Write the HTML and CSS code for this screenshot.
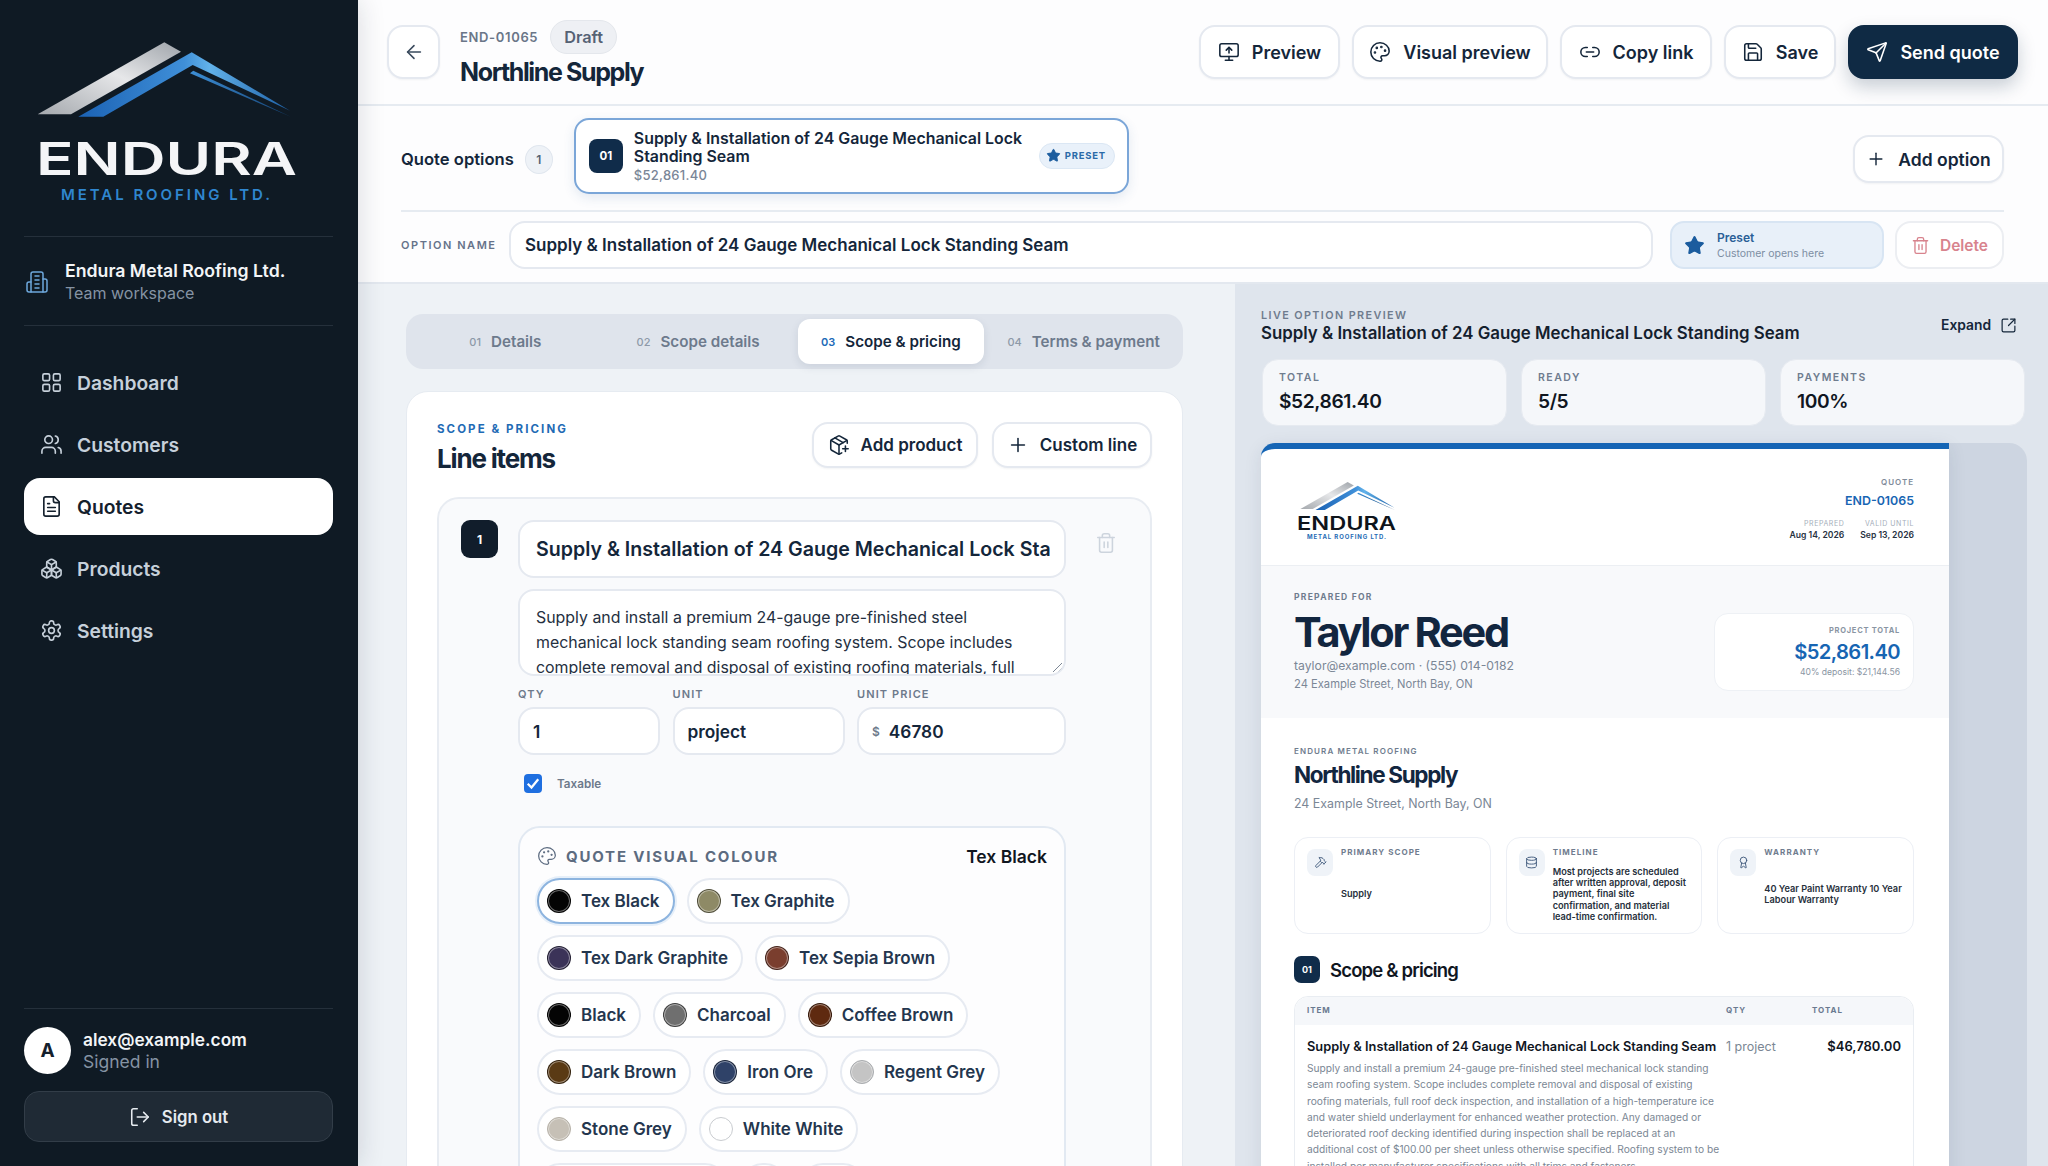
FILE: index.html
```html
<!DOCTYPE html>
<html lang="en">

<head>
    <meta charset="UTF-8" />
    <title>Northline Supply - Quote END-01065</title>
    <link rel="stylesheet" href="styles.css">
</head>

<body>
    <!-- icon sprite -->
    <svg class="sprite" aria-hidden="true">
        <defs>
            <linearGradient id="roofGrey" x1="0" y1="1" x2="1" y2="0">
                <stop offset="0" stop-color="#a5a9ae" />
                <stop offset="0.55" stop-color="#e6e7e9" />
                <stop offset="1" stop-color="#9fa4aa" />
            </linearGradient>
            <linearGradient id="roofBlue" x1="0" y1="0" x2="1" y2="0">
                <stop offset="0" stop-color="#1b62b4" />
                <stop offset="0.5" stop-color="#3f8fd8" />
                <stop offset="0.62" stop-color="#62b2ea" />
                <stop offset="1" stop-color="#1c5fa6" />
            </linearGradient>
            <linearGradient id="roofThin" x1="0" y1="0" x2="1" y2="0">
                <stop offset="0" stop-color="#3d8fd6" />
                <stop offset="1" stop-color="#123f70" />
            </linearGradient>
        </defs>
        <symbol id="i-roof" viewBox="37 42 254 75">
            <polygon points="37.7,114.3 164.3,42.3 181,51.7 71,114.3" fill="url(#roofGrey)" />
            <polygon points="78.3,116.7 191.7,52.3 290,110.7 192.7,65 103.3,116.7" fill="url(#roofBlue)" />
            <polygon points="190,73.3 193.3,70.7 290.7,116.7" fill="url(#roofThin)" />
        </symbol>
        <symbol id="i-grid" viewBox="0 0 24 24"><rect x="3" y="3" width="7" height="7" rx="1.5" /><rect x="14" y="3" width="7" height="7" rx="1.5" /><rect x="14" y="14" width="7" height="7" rx="1.5" /><rect x="3" y="14" width="7" height="7" rx="1.5" /></symbol>
        <symbol id="i-users" viewBox="0 0 24 24"><path d="M16 21v-2a4 4 0 0 0-4-4H6a4 4 0 0 0-4 4v2" /><circle cx="9" cy="7" r="4" /><path d="M22 21v-2a4 4 0 0 0-3-3.87" /><path d="M16 3.13a4 4 0 0 1 0 7.75" /></symbol>
        <symbol id="i-file" viewBox="0 0 24 24"><path d="M15 2H6a2 2 0 0 0-2 2v16a2 2 0 0 0 2 2h12a2 2 0 0 0 2-2V7Z" /><path d="M14 2v4a2 2 0 0 0 2 2h4" /><path d="M10 9H8" /><path d="M16 13H8" /><path d="M16 17H8" /></symbol>
        <symbol id="i-boxes" viewBox="0 0 24 24"><path d="M2.97 12.92A2 2 0 0 0 2 14.63v3.24a2 2 0 0 0 .97 1.71l3 1.8a2 2 0 0 0 2.06 0L12 19v-5.5l-5-3-4.03 2.42Z" /><path d="m7 16.5-4.74-2.85" /><path d="m7 16.5 5-3" /><path d="M7 16.5v5.17" /><path d="M12 13.5V19l3.97 2.38a2 2 0 0 0 2.06 0l3-1.8a2 2 0 0 0 .97-1.71v-3.24a2 2 0 0 0-.97-1.71L17 10.5l-5 3Z" /><path d="m17 16.5-5-3" /><path d="m17 16.5 4.74-2.85" /><path d="M17 16.5v5.17" /><path d="M7.97 4.42A2 2 0 0 0 7 6.13v4.37l5 3 5-3V6.13a2 2 0 0 0-.97-1.71l-3-1.8a2 2 0 0 0-2.06 0l-3 1.8Z" /><path d="M12 8 7.26 5.15" /><path d="m12 8 4.74-2.85" /><path d="M12 13.5V8" /></symbol>
        <symbol id="i-gear" viewBox="0 0 24 24"><path d="M12.22 2h-.44a2 2 0 0 0-2 2v.18a2 2 0 0 1-1 1.73l-.43.25a2 2 0 0 1-2 0l-.15-.08a2 2 0 0 0-2.73.73l-.22.38a2 2 0 0 0 .73 2.73l.15.1a2 2 0 0 1 1 1.72v.51a2 2 0 0 1-1 1.74l-.15.09a2 2 0 0 0-.73 2.73l.22.38a2 2 0 0 0 2.73.73l.15-.08a2 2 0 0 1 2 0l.43.25a2 2 0 0 1 1 1.73V20a2 2 0 0 0 2 2h.44a2 2 0 0 0 2-2v-.18a2 2 0 0 1 1-1.73l.43-.25a2 2 0 0 1 2 0l.15.08a2 2 0 0 0 2.73-.73l.22-.39a2 2 0 0 0-.73-2.73l-.15-.08a2 2 0 0 1-1-1.74v-.5a2 2 0 0 1 1-1.74l.15-.09a2 2 0 0 0 .73-2.73l-.22-.38a2 2 0 0 0-2.73-.73l-.15.08a2 2 0 0 1-2 0l-.43-.25a2 2 0 0 1-1-1.73V4a2 2 0 0 0-2-2z" /><circle cx="12" cy="12" r="3" /></symbol>
        <symbol id="i-building" viewBox="0 0 24 24"><path d="M6 22V4a2 2 0 0 1 2-2h8a2 2 0 0 1 2 2v18Z" /><path d="M6 12H4a2 2 0 0 0-2 2v6a2 2 0 0 0 2 2h2" /><path d="M18 9h2a2 2 0 0 1 2 2v9a2 2 0 0 1-2 2h-2" /><path d="M10 6h4" /><path d="M10 10h4" /><path d="M10 14h4" /><path d="M10 18h4" /></symbol>
        <symbol id="i-back" viewBox="0 0 24 24"><path d="m12 19-7-7 7-7" /><path d="M19 12H5" /></symbol>
        <symbol id="i-monitor" viewBox="0 0 24 24"><path d="m9 10 3-3 3 3" /><path d="M12 13V7" /><rect x="2" y="3" width="20" height="14" rx="2" /><path d="M12 17v4" /><path d="M8 21h8" /></symbol>
        <symbol id="i-palette" viewBox="0 0 24 24"><path d="M12 22a1 1 0 0 1 0-20 10 9 0 0 1 10 9 5 5 0 0 1-5 5h-2.25a1.75 1.75 0 0 0-1.4 2.8l.3.4a1.75 1.75 0 0 1-1.4 2.8z" /><circle cx="13.5" cy="6.5" r=".6" /><circle cx="17.5" cy="10.5" r=".6" /><circle cx="6.5" cy="12.5" r=".6" /><circle cx="8.5" cy="7.5" r=".6" /></symbol>
        <symbol id="i-link" viewBox="0 0 24 24"><path d="M9 17H7A5 5 0 0 1 7 7h2" /><path d="M15 7h2a5 5 0 1 1 0 10h-2" /><path d="M8 12h8" /></symbol>
        <symbol id="i-save" viewBox="0 0 24 24"><path d="M15.2 3a2 2 0 0 1 1.4.6l3.8 3.8a2 2 0 0 1 .6 1.4V19a2 2 0 0 1-2 2H5a2 2 0 0 1-2-2V5a2 2 0 0 1 2-2z" /><path d="M17 21v-7a1 1 0 0 0-1-1H8a1 1 0 0 0-1 1v7" /><path d="M7 3v4a1 1 0 0 0 1 1h7" /></symbol>
        <symbol id="i-send" viewBox="0 0 24 24"><path d="M14.536 21.686a.5.5 0 0 0 .937-.024l6.5-19a.496.496 0 0 0-.635-.635l-19 6.5a.5.5 0 0 0-.024.937l7.93 3.18a2 2 0 0 1 1.112 1.11z" /><path d="m21.854 2.147-10.94 10.939" /></symbol>
        <symbol id="i-plus" viewBox="0 0 24 24"><path d="M5 12h14" /><path d="M12 5v14" /></symbol>
        <symbol id="i-star" viewBox="0 0 24 24"><path d="M11.525 2.295a.53.53 0 0 1 .95 0l2.31 4.679a2.123 2.123 0 0 0 1.595 1.16l5.166.756a.53.53 0 0 1 .294.904l-3.736 3.638a2.123 2.123 0 0 0-.611 1.878l.882 5.14a.53.53 0 0 1-.771.56l-4.618-2.428a2.122 2.122 0 0 0-1.973 0L6.396 21.01a.53.53 0 0 1-.77-.56l.881-5.139a2.122 2.122 0 0 0-.611-1.879L2.16 9.795a.53.53 0 0 1 .294-.906l5.165-.755a2.122 2.122 0 0 0 1.597-1.16z" /></symbol>
        <symbol id="i-trash" viewBox="0 0 24 24"><path d="M3 6h18" /><path d="M19 6v14c0 1-1 2-2 2H7c-1 0-2-1-2-2V6" /><path d="M8 6V4c0-1 1-2 2-2h4c1 0 2 1 2 2v2" /><path d="M10 11v6" /><path d="M14 11v6" /></symbol>
        <symbol id="i-expand" viewBox="0 0 24 24"><path d="M21 13v6a2 2 0 0 1-2 2H5a2 2 0 0 1-2-2V5a2 2 0 0 1 2-2h6" /><path d="m21 3-9 9" /><path d="M15 3h6v6" /></symbol>
        <symbol id="i-logout" viewBox="0 0 24 24"><path d="M9 21H5a2 2 0 0 1-2-2V5a2 2 0 0 1 2-2h4" /><path d="m16 17 5-5-5-5" /><path d="M21 12H9" /></symbol>
        <symbol id="i-package" viewBox="0 0 24 24"><path d="M16 16h6" /><path d="M19 13v6" /><path d="M21 10V8a2 2 0 0 0-1-1.73l-7-4a2 2 0 0 0-2 0l-7 4A2 2 0 0 0 3 8v8a2 2 0 0 0 1 1.73l7 4a2 2 0 0 0 2 0l2-1.14" /><path d="m7.5 4.27 9 5.15" /><path d="M3.29 7 12 12l8.71-5" /><path d="M12 22V12" /></symbol>
        <symbol id="i-hammer" viewBox="0 0 24 24"><path d="m15 12-8.373 8.373a1 1 0 1 1-3-3L12 9" /><path d="m18 15 4-4" /><path d="m21.5 11.5-1.914-1.914A2 2 0 0 1 19 8.172V7l-2.26-2.26a6 6 0 0 0-4.202-1.756L9 2.96l.92.82A6.18 6.18 0 0 1 12 8.4V10l2 2h1.172a2 2 0 0 1 1.414.586L18.5 14.5" /></symbol>
        <symbol id="i-database" viewBox="0 0 24 24"><ellipse cx="12" cy="5" rx="9" ry="3" /><path d="M3 5v14a9 3 0 0 0 18 0V5" /><path d="M3 12a9 3 0 0 0 18 0" /></symbol>
        <symbol id="i-award" viewBox="0 0 24 24"><path d="m15.477 12.89 1.515 8.526a.5.5 0 0 1-.81.47l-3.58-2.687a1 1 0 0 0-1.197 0l-3.586 2.686a.5.5 0 0 1-.81-.469l1.514-8.526" /><circle cx="12" cy="8" r="6" /></symbol>
    </svg>

    <div class="app">
        <!-- ====== Sidebar ====== -->
        <aside class="sidebar">
            <svg class="brand" viewBox="24 0 310 236">
                <use href="#i-roof" x="37" y="42" width="254" height="75" />
                <text x="36" y="175" textLength="261" lengthAdjust="spacingAndGlyphs" class="brand-name">ENDURA</text>
                <text x="61" y="200" textLength="209" class="brand-sub">METAL ROOFING LTD.</text>
            </svg>

            <div class="workspace">
                <svg class="icon workspace-icon"><use href="#i-building" /></svg>
                <div>
                    <div class="workspace-name">Endura Metal Roofing Ltd.</div>
                    <div class="workspace-sub">Team workspace</div>
                </div>
            </div>

            <nav class="nav">
                <a class="nav-item"><svg class="icon"><use href="#i-grid" /></svg>Dashboard</a>
                <a class="nav-item"><svg class="icon"><use href="#i-users" /></svg>Customers</a>
                <a class="nav-item active"><svg class="icon"><use href="#i-file" /></svg>Quotes</a>
                <a class="nav-item"><svg class="icon"><use href="#i-boxes" /></svg>Products</a>
                <a class="nav-item"><svg class="icon"><use href="#i-gear" /></svg>Settings</a>
            </nav>

            <div class="account">
                <div class="account-row">
                    <div class="avatar">A</div>
                    <div>
                        <div class="account-email">alex@example.com</div>
                        <div class="account-sub">Signed in</div>
                    </div>
                </div>
                <button class="signout"><svg class="icon"><use href="#i-logout" /></svg>Sign out</button>
            </div>
        </aside>

        <main class="main">
            <!-- ====== Top bar ====== -->
            <header class="topbar">
                <button class="btn btn-back"><svg class="icon"><use href="#i-back" /></svg></button>
                <div class="topbar-title">
                    <div class="topbar-meta">
                        <span class="quote-no">END-01065</span>
                        <span class="status-pill">Draft</span>
                    </div>
                    <h1>Northline Supply</h1>
                </div>
                <div class="topbar-actions">
                    <button class="btn btn-preview"><svg class="icon"><use href="#i-monitor" /></svg>Preview</button>
                    <button class="btn btn-visual"><svg class="icon"><use href="#i-palette" /></svg>Visual preview</button>
                    <button class="btn btn-copy"><svg class="icon"><use href="#i-link" /></svg>Copy link</button>
                    <button class="btn btn-save"><svg class="icon"><use href="#i-save" /></svg>Save</button>
                    <button class="btn btn-send"><svg class="icon"><use href="#i-send" /></svg>Send quote</button>
                </div>
            </header>

            <!-- ====== Quote options ====== -->
            <section class="options">
                <div class="options-row">
                    <span class="options-label">Quote options</span>
                    <span class="options-count">1</span>
                    <div class="option-card">
                        <span class="option-no">01</span>
                        <div class="option-text">
                            <div class="option-title">Supply &amp; Installation of 24 Gauge Mechanical Lock Standing Seam</div>
                            <div class="option-price">$52,861.40</div>
                        </div>
                        <span class="preset-pill"><svg class="icon-fill"><use href="#i-star" /></svg>PRESET</span>
                    </div>
                    <button class="btn btn-add-option"><svg class="icon"><use href="#i-plus" /></svg>Add option</button>
                </div>
                <div class="name-row">
                    <span class="name-label">OPTION NAME</span>
                    <div class="name-input">Supply &amp; Installation of 24 Gauge Mechanical Lock Standing Seam</div>
                    <div class="preset-btn">
                        <svg class="icon-fill"><use href="#i-star" /></svg>
                        <div>
                            <div class="preset-btn-title">Preset</div>
                            <div class="preset-btn-sub">Customer opens here</div>
                        </div>
                    </div>
                    <button class="btn btn-delete"><svg class="icon"><use href="#i-trash" /></svg>Delete</button>
                </div>
            </section>

            <div class="split">
                <!-- ====== Editor ====== -->
                <section class="editor">
                    <div class="tabs">
                        <div class="tab"><span class="tab-no">01</span>Details</div>
                        <div class="tab"><span class="tab-no">02</span>Scope details</div>
                        <div class="tab active"><span class="tab-no">03</span>Scope &amp; pricing</div>
                        <div class="tab"><span class="tab-no">04</span>Terms &amp; payment</div>
                    </div>

                    <div class="card">
                        <div class="card-head">
                            <div>
                                <div class="eyebrow">SCOPE &amp; PRICING</div>
                                <h2>Line items</h2>
                            </div>
                            <div class="card-actions">
                                <button class="btn btn-product"><svg class="icon"><use href="#i-package" /></svg>Add product</button>
                                <button class="btn btn-custom"><svg class="icon"><use href="#i-plus" /></svg>Custom line</button>
                            </div>
                        </div>

                        <div class="line-item">
                            <span class="line-no">1</span>
                            <div class="line-main">
                                <div class="field line-title"><span>Supply &amp; Installation of 24 Gauge Mechanical Lock Standing Seam</span></div>
                                <div class="field line-desc">Supply and install a premium 24-gauge pre-finished steel mechanical lock standing seam roofing system. Scope includes complete removal and disposal of existing roofing materials, full
                                    <svg class="resize-grip" viewBox="0 0 12 12"><path d="M11 2 2 11M11 7l-4 4" /></svg>
                                </div>
                                <div class="line-fields">
                                    <label>QTY</label>
                                    <label>UNIT</label>
                                    <label>UNIT PRICE</label>
                                    <div class="field small-field">1</div>
                                    <div class="field small-field">project</div>
                                    <div class="field small-field"><span class="currency">$</span>46780</div>
                                </div>
                                <div class="taxable">
                                    <span class="checkbox"><svg viewBox="0 0 24 24"><path d="M5 13l5 5 9-11" /></svg></span>
                                    Taxable
                                </div>

                                <div class="colours">
                                    <div class="colours-head">
                                        <svg class="icon"><use href="#i-palette" /></svg>
                                        <span class="colours-title">QUOTE VISUAL COLOUR</span>
                                        <span class="colours-value">Tex Black</span>
                                    </div>
                                    <div class="chips">
                                        <div class="chip selected"><span class="swatch tex-black"></span>Tex Black</div>
                                        <div class="chip"><span class="swatch tex-graphite"></span>Tex Graphite</div>
                                        <div class="chip"><span class="swatch tex-dark-graphite"></span>Tex Dark Graphite</div>
                                        <div class="chip"><span class="swatch tex-sepia"></span>Tex Sepia Brown</div>
                                        <div class="chip"><span class="swatch black"></span>Black</div>
                                        <div class="chip"><span class="swatch charcoal"></span>Charcoal</div>
                                        <div class="chip"><span class="swatch coffee"></span>Coffee Brown</div>
                                        <div class="chip"><span class="swatch dark-brown"></span>Dark Brown</div>
                                        <div class="chip"><span class="swatch iron-ore"></span>Iron Ore</div>
                                        <div class="chip"><span class="swatch regent"></span>Regent Grey</div>
                                        <div class="chip"><span class="swatch stone"></span>Stone Grey</div>
                                        <div class="chip"><span class="swatch white"></span>White White</div>
                                        <div class="chip chip-cut-a"></div>
                                        <div class="chip chip-cut-b"></div>
                                        <div class="chip chip-cut-c"></div>
                                    </div>
                                </div>
                            </div>
                            <svg class="icon line-trash"><use href="#i-trash" /></svg>
                        </div>
                    </div>
                </section>

                <!-- ====== Live preview ====== -->
                <section class="preview">
                    <div class="preview-head">
                        <div>
                            <div class="preview-eyebrow">LIVE OPTION PREVIEW</div>
                            <div class="preview-title">Supply &amp; Installation of 24 Gauge Mechanical Lock Standing Seam</div>
                        </div>
                        <div class="expand">Expand<svg class="icon"><use href="#i-expand" /></svg></div>
                    </div>

                    <div class="stats">
                        <div class="stat"><div class="stat-label">TOTAL</div><div class="stat-value">$52,861.40</div></div>
                        <div class="stat"><div class="stat-label">READY</div><div class="stat-value">5/5</div></div>
                        <div class="stat"><div class="stat-label">PAYMENTS</div><div class="stat-value">100%</div></div>
                    </div>

                    <div class="frame">
                        <article class="doc">
                            <div class="doc-head">
                                <svg class="doc-logo" viewBox="0 0 100 58">
                                    <use href="#i-roof" x="3" y="0" width="95" height="28" />
                                    <text x="0" y="48" textLength="99" lengthAdjust="spacingAndGlyphs" class="doc-logo-name">ENDURA</text>
                                    <text x="10" y="57" textLength="79" class="doc-logo-sub">METAL ROOFING LTD.</text>
                                </svg>
                                <div class="doc-meta">
                                    <div class="doc-meta-label">QUOTE</div>
                                    <div class="doc-no">END-01065</div>
                                    <div class="doc-dates">
                                        <div><div class="doc-date-label">PREPARED</div><div class="doc-date">Aug 14, 2026</div></div>
                                        <div><div class="doc-date-label">VALID UNTIL</div><div class="doc-date">Sep 13, 2026</div></div>
                                    </div>
                                </div>
                            </div>

                            <div class="doc-band">
                                <div>
                                    <div class="doc-small-label">PREPARED FOR</div>
                                    <div class="doc-client">Taylor Reed</div>
                                    <div class="doc-contact">taylor@example.com · (555) 014-0182</div>
                                    <div class="doc-contact doc-contact-small">24 Example Street, North Bay, ON</div>
                                </div>
                                <div class="doc-total">
                                    <div class="doc-total-label">PROJECT TOTAL</div>
                                    <div class="doc-total-value">$52,861.40</div>
                                    <div class="doc-total-sub">40% deposit: $21,144.56</div>
                                </div>
                            </div>

                            <div class="doc-body">
                                <div class="doc-from">ENDURA METAL ROOFING</div>
                                <div class="doc-company">Northline Supply</div>
                                <div class="doc-address">24 Example Street, North Bay, ON</div>

                                <div class="facts">
                                    <div class="fact">
                                        <span class="fact-icon"><svg class="icon"><use href="#i-hammer" /></svg></span>
                                        <div class="fact-body">
                                            <div class="fact-label">PRIMARY SCOPE</div>
                                            <div class="fact-text"><div>Supply</div></div>
                                        </div>
                                    </div>
                                    <div class="fact">
                                        <span class="fact-icon"><svg class="icon"><use href="#i-database" /></svg></span>
                                        <div class="fact-body">
                                            <div class="fact-label">TIMELINE</div>
                                            <div class="fact-text"><div>Most projects are scheduled after written approval, deposit payment, final site confirmation, and material <span class="nowrap">lead-time</span> confirmation.</div></div>
                                        </div>
                                    </div>
                                    <div class="fact">
                                        <span class="fact-icon"><svg class="icon"><use href="#i-award" /></svg></span>
                                        <div class="fact-body">
                                            <div class="fact-label">WARRANTY</div>
                                            <div class="fact-text"><div>40 Year Paint Warranty 10 Year Labour Warranty</div></div>
                                        </div>
                                    </div>
                                </div>

                                <div class="doc-section">
                                    <span class="doc-section-no">01</span>
                                    <h3>Scope &amp; pricing</h3>
                                </div>

                                <div class="doc-table">
                                    <div class="doc-row doc-row-head">
                                        <span>ITEM</span><span>QTY</span><span>TOTAL</span>
                                    </div>
                                    <div class="doc-row">
                                        <div>
                                            <div class="doc-item-title">Supply &amp; Installation of 24 Gauge Mechanical Lock Standing Seam</div>
                                            <div class="doc-item-desc">Supply and install a premium 24-gauge pre-finished steel mechanical lock standing seam roofing system. Scope includes complete removal and disposal of existing roofing materials, full roof deck inspection, and installation of a high-temperature ice and water shield underlayment for enhanced weather protection. Any damaged or deteriorated roof decking identified during inspection shall be replaced at an additional cost of $100.00 per sheet unless otherwise specified. Roofing system to be installed per manufacturer specifications with all trims and fasteners.</div>
                                        </div>
                                        <div class="doc-item-qty">1 project</div>
                                        <div class="doc-item-total">$46,780.00</div>
                                    </div>
                                </div>
                            </div>
                        </article>
                    </div>
                </section>
            </div>
        </main>
    </div>
</body>

</html>
```

FILE: styles.css
```css
* {
    box-sizing: border-box;
}

html,
body {
    margin: 0;
    padding: 0;
    height: 100%;
    overflow: hidden;
}

body {
    font-family: Inter, "Noto Sans", sans-serif;
    color: #14263a;
    background: #eef2f6;
}

h1,
h2,
h3 {
    margin: 0;
}

button {
    font-family: inherit;
}

.nowrap {
    white-space: nowrap;
}

.sprite {
    position: absolute;
    width: 0;
    height: 0;
}

.icon {
    width: 22px;
    height: 22px;
    flex: none;
    fill: none;
    stroke: currentColor;
    stroke-width: 1.7;
    stroke-linecap: round;
    stroke-linejoin: round;
}

.icon-fill {
    flex: none;
    fill: #1b5c9e;
    stroke: #1b5c9e;
    stroke-width: 1.5;
    stroke-linejoin: round;
}

.app {
    display: flex;
    height: 100vh;
}

/* ====== Sidebar ====== */
.sidebar {
    width: 358px;
    flex: none;
    display: flex;
    flex-direction: column;
    padding: 0 25px 24px 24px;
    background: #0f1a24;
    box-shadow: 0 0 26px rgba(20, 32, 50, 0.16);
    position: relative;
    z-index: 2;
}

.brand {
    width: 310px;
    height: 236px;
    flex: none;
    margin-top: 0;
}

.brand-name {
    font: 600 45px Inter, sans-serif;
    fill: #f4f5f7;
}

.brand-sub {
    font: 600 15px Inter, sans-serif;
    fill: #2f86cf;
}

.workspace {
    height: 90px;
    display: flex;
    align-items: center;
    gap: 16px;
    padding: 1px 0 0 1px;
    border-top: 1px solid #25303b;
    border-bottom: 1px solid #25303b;
}

.workspace-icon {
    width: 24px;
    height: 24px;
    color: #6ea8dc;
    stroke-width: 1.5;
}

.workspace-name {
    font-size: 17.7px;
    font-weight: 600;
    line-height: 23px;
    color: #f3f5f7;
}

.workspace-sub {
    font-size: 16px;
    line-height: 22px;
    color: #8593a3;
}

.nav {
    display: flex;
    flex-direction: column;
    gap: 5px;
    margin-top: 28px;
}

.nav-item {
    height: 57px;
    display: flex;
    align-items: center;
    gap: 14px;
    padding-left: 16px;
    border-radius: 16px;
    font-size: 19.3px;
    font-weight: 600;
    color: #c6d0da;
}

.nav-item .icon {
    width: 23px;
    height: 23px;
}

.nav-item.active {
    background: #fff;
    color: #14202d;
}

.account {
    margin-top: auto;
    border-top: 1px solid #25303b;
    padding-top: 18px;
}

.account-row {
    display: flex;
    align-items: center;
    gap: 12px;
}

.avatar {
    width: 47px;
    height: 47px;
    border-radius: 50%;
    display: flex;
    align-items: center;
    justify-content: center;
    background: #fff;
    color: #14202d;
    font-size: 19px;
    font-weight: 700;
}

.account-email {
    font-size: 17.3px;
    font-weight: 600;
    line-height: 22px;
    color: #f3f5f7;
}

.account-sub {
    font-size: 17.5px;
    line-height: 22px;
    color: #8593a3;
}

.signout {
    width: 100%;
    height: 51px;
    margin-top: 17px;
    display: flex;
    align-items: center;
    justify-content: center;
    gap: 11px;
    background: #1f2a35;
    border: 1px solid #323d48;
    border-radius: 15px;
    color: #e6ebf0;
    font-size: 16.7px;
    font-weight: 600;
}

/* ====== Buttons ====== */
.btn {
    height: 54px;
    display: flex;
    align-items: center;
    justify-content: center;
    gap: 12px;
    padding: 0;
    background: #fff;
    border: 2px solid #e5e9f0;
    border-radius: 16px;
    color: #14263a;
    font-size: 18px;
    font-weight: 600;
    box-shadow: 0 1px 2px rgba(20, 38, 58, 0.05);
}

.btn-back {
    width: 53px;
    margin-left: -1px;
    color: #39495c;
    flex: none;
}

.btn-preview {
    width: 141px;
}

.btn-visual {
    width: 196px;
}

.btn-copy {
    width: 152px;
}

.btn-save {
    width: 112px;
}

.btn-send {
    width: 170px;
    background: #0f2a44;
    border-color: #0f2a44;
    color: #fff;
    box-shadow: 0 8px 18px rgba(15, 42, 68, 0.22);
}

/* ====== Top bar ====== */
.main {
    flex: 1;
    min-width: 0;
    display: flex;
    flex-direction: column;
}

.topbar {
    height: 106px;
    flex: none;
    display: flex;
    align-items: center;
    padding: 0 30px;
    background: #fdfdfe;
    border-bottom: 2px solid #e6ebf1;
}

.topbar-title {
    margin-left: 20px;
    margin-top: 3px;
}

.topbar-meta {
    display: flex;
    align-items: center;
    gap: 12px;
}

.quote-no {
    font-size: 13px;
    font-weight: 600;
    letter-spacing: 0.05em;
    color: #6a7688;
}

.status-pill {
    height: 34px;
    padding: 0 13px;
    display: flex;
    align-items: center;
    border-radius: 17px;
    background: #eef0f4;
    border: 1px solid #e4e7ec;
    color: #556274;
    font-size: 16.3px;
    font-weight: 600;
}

h1 {
    margin-top: 2px;
    font-size: 25px;
    line-height: 32px;
    font-weight: 700;
    letter-spacing: -0.055em;
    color: #14263a;
}

.topbar-actions {
    margin-left: auto;
    display: flex;
    gap: 12px;
}

/* ====== Quote options ====== */
.options {
    flex: none;
    height: 178px;
    padding: 0 44px 0 43px;
    background: #fdfdfe;
    border-bottom: 2px solid #e3e8ef;
}

.options-row {
    height: 106px;
    padding-top: 2px;
    display: flex;
    align-items: center;
    border-bottom: 2px solid #e6ebf1;
}

.options-label {
    font-size: 16.6px;
    font-weight: 600;
    color: #14263a;
}

.options-count {
    width: 28px;
    height: 29px;
    margin-left: 11px;
    display: flex;
    align-items: center;
    justify-content: center;
    border-radius: 50%;
    background: #eef2f7;
    border: 1px solid #e0e6ee;
    color: #556274;
    font-size: 12px;
    font-weight: 600;
}

.option-card {
    width: 555px;
    height: 76px;
    margin: -7px 0 0 21px;
    padding: 0 12px 0 13px;
    display: flex;
    align-items: center;
    gap: 11px;
    background: #fff;
    border: 2px solid #7ba6d8;
    border-radius: 15px;
    box-shadow: 0 4px 12px rgba(40, 90, 150, 0.12);
}

.option-no {
    width: 34px;
    height: 34px;
    flex: none;
    display: flex;
    align-items: center;
    justify-content: center;
    border-radius: 8px;
    background: #102c4a;
    color: #fff;
    font-size: 11.5px;
    font-weight: 700;
}

.option-text {
    flex: 1;
    margin-top: 2px;
}

.option-title {
    font-size: 15.9px;
    line-height: 18px;
    font-weight: 600;
    color: #14263a;
}

.option-price {
    font-size: 13px;
    line-height: 18px;
    font-weight: 500;
    letter-spacing: 0.02em;
    color: #7a8697;
}

.preset-pill {
    height: 26px;
    padding: 0 8px 0 6px;
    flex: none;
    display: flex;
    align-items: center;
    gap: 4px;
    border-radius: 13px;
    background: #e9f1fa;
    border: 1px solid #dbe7f4;
    color: #2a6aa8;
    font-size: 9.5px;
    font-weight: 700;
    letter-spacing: 0.08em;
}

.preset-pill svg {
    width: 15px;
    height: 15px;
}

.btn-add-option {
    width: 151px;
    height: 48px;
    margin-left: auto;
    font-size: 17.5px;
}

.btn-add-option .icon {
    width: 20px;
    height: 20px;
}

.name-row {
    height: 70px;
    display: flex;
    align-items: flex-start;
    padding-top: 9px;
}

.name-label {
    width: 108px;
    flex: none;
    line-height: 48px;
    font-size: 11px;
    font-weight: 600;
    letter-spacing: 0.14em;
    color: #66738a;
}

.name-input {
    width: 1144px;
    height: 48px;
    padding-left: 14px;
    display: flex;
    align-items: center;
    background: #fff;
    border: 2px solid #e5e9f0;
    border-radius: 16px;
    font-size: 17px;
    font-weight: 600;
    color: #14263a;
}

.preset-btn {
    width: 214px;
    height: 48px;
    margin-left: 17px;
    padding-left: 12px;
    display: flex;
    align-items: center;
    gap: 12px;
    background: #e8f0f9;
    border: 2px solid #d8e5f3;
    border-radius: 14px;
}

.preset-btn svg {
    width: 21px;
    height: 21px;
}

.preset-btn-title {
    font-size: 12px;
    line-height: 16px;
    font-weight: 600;
    color: #2a5f97;
}

.preset-btn-sub {
    font-size: 10.5px;
    line-height: 15px;
    color: #7d8ea3;
}

.btn-delete {
    width: 109px;
    height: 48px;
    margin-left: 11px;
    gap: 10px;
    border-color: #eceef2;
    color: #d8838d;
    font-size: 15.5px;
    box-shadow: none;
}

.btn-delete .icon {
    width: 19px;
    height: 19px;
}

/* ====== Split panes ====== */
.split {
    flex: 1;
    min-height: 0;
    display: flex;
    overflow: hidden;
}

.editor {
    width: 877px;
    flex: none;
    padding: 30px 52px 0 48px;
    background: #eef2f6;
    overflow: hidden;
}

.tabs {
    height: 55px;
    padding: 5px 6px;
    display: grid;
    grid-template-columns: repeat(4, 1fr);
    gap: 6px;
    border-radius: 17px;
    background: #dfe4ec;
}

.tab {
    display: flex;
    align-items: center;
    justify-content: center;
    gap: 10px;
    border-radius: 12px;
    font-size: 15.2px;
    font-weight: 600;
    color: #6d7a8c;
    white-space: nowrap;
}

.tab-no {
    font-size: 11px;
    font-weight: 500;
    color: #8d99a8;
}

.tab.active {
    background: #fff;
    color: #14263a;
    box-shadow: 0 3px 8px rgba(30, 50, 80, 0.1);
}

.tab.active .tab-no {
    color: #1d6ab8;
    font-weight: 600;
}

.card {
    margin-top: 22px;
    height: 900px;
    padding: 30px 30px 0;
    background: #fff;
    border: 1px solid #e6ebf1;
    border-radius: 22px;
}

.card-head {
    display: flex;
    justify-content: space-between;
    align-items: flex-start;
}

.eyebrow {
    font-size: 11.5px;
    line-height: 14px;
    font-weight: 700;
    letter-spacing: 0.18em;
    color: #1f6bb5;
}

h2 {
    margin-top: 6px;
    font-size: 26px;
    line-height: 34px;
    font-weight: 700;
    letter-spacing: -0.045em;
    color: #14263a;
}

.card-actions {
    display: flex;
    gap: 14px;
}

.card-actions .btn {
    height: 46px;
    font-size: 17px;
    gap: 11px;
}

.btn-product {
    width: 166px;
}

.btn-custom {
    width: 160px;
}

.line-item {
    margin-top: 21px;
    height: 800px;
    padding: 21px 0 0 22px;
    display: flex;
    align-items: flex-start;
    background: #f9fafc;
    border: 2px solid #e8ecf2;
    border-radius: 22px;
}

.line-no {
    width: 37px;
    height: 38px;
    flex: none;
    display: flex;
    align-items: center;
    justify-content: center;
    border-radius: 9px;
    background: #111d2b;
    color: #fff;
    font-size: 12px;
    font-weight: 700;
}

.line-main {
    width: 548px;
    flex: none;
    margin-left: 20px;
}

.line-trash {
    margin: 12px 0 0 29px;
    color: #cdd4dd;
}

.field {
    background: #fff;
    border: 2px solid #e5e9f0;
    border-radius: 16px;
    color: #14263a;
}

.line-title {
    height: 58px;
    padding: 0 14px 0 16px;
    display: flex;
    align-items: center;
    overflow: hidden;
    font-size: 19.6px;
    font-weight: 600;
    white-space: nowrap;
}

.line-title span {
    display: block;
    overflow: hidden;
}

.line-desc {
    position: relative;
    height: 87px;
    margin-top: 11px;
    padding: 14px 30px 0 16px;
    overflow: hidden;
    font-size: 15.9px;
    line-height: 25px;
    color: #25303f;
}

.resize-grip {
    position: absolute;
    right: 1px;
    bottom: 1px;
    width: 12px;
    height: 12px;
    fill: none;
    stroke: #7d8795;
    stroke-width: 1;
}

.line-fields {
    margin-top: 12px;
    display: grid;
    grid-template-columns: 142px 172px 1fr;
    column-gap: 12.5px;
    row-gap: 6px;
}

.line-fields label {
    font-size: 11px;
    line-height: 13px;
    font-weight: 600;
    letter-spacing: 0.1em;
    color: #6d798b;
}

.small-field {
    height: 48px;
    padding: 0 13px;
    display: flex;
    align-items: center;
    font-size: 17.3px;
    font-weight: 600;
}

.currency {
    margin-right: 9px;
    font-size: 12px;
    color: #6d798b;
}

.taxable {
    margin-top: 19px;
    padding-left: 6px;
    display: flex;
    align-items: center;
    gap: 15px;
    font-size: 11.7px;
    font-weight: 600;
    color: #6d798b;
}

.checkbox {
    width: 18px;
    height: 19px;
    display: block;
    border-radius: 4px;
    background: #1f6fe0;
}

.checkbox svg {
    display: block;
    fill: none;
    stroke: #fff;
    stroke-width: 3;
}

.colours {
    margin-top: 33px;
    padding: 18px 17px 0;
    height: 500px;
    background: #fdfdfe;
    border: 2px solid #e2e9f2;
    border-radius: 22px;
}

.colours-head {
    display: flex;
    align-items: center;
    height: 20px;
}

.colours-head .icon {
    width: 20px;
    height: 20px;
    color: #5c6b80;
    stroke-width: 1.5;
}

.colours-title {
    margin-left: 9px;
    font-size: 15px;
    font-weight: 700;
    letter-spacing: 0.12em;
    color: #5c6b80;
}

.colours-value {
    margin-left: auto;
    font-size: 17.5px;
    font-weight: 600;
    color: #10161f;
}

.chips {
    margin-top: 12px;
    display: flex;
    flex-wrap: wrap;
    column-gap: 12px;
    row-gap: 11px;
}

.chip {
    height: 46px;
    padding: 0 13px 0 8px;
    display: flex;
    align-items: center;
    gap: 10px;
    background: #fff;
    border: 2px solid #e7ebf2;
    border-radius: 23px;
    font-size: 17px;
    font-weight: 600;
    color: #24364e;
}

.chip.selected {
    border-color: #8db4df;
    box-shadow: 0 0 0 2px #e6eff9;
}

.chip-cut-a {
    width: 191px;
}

.chip-cut-b {
    width: 48px;
}

.chip-cut-c {
    width: 66px;
}

.swatch {
    width: 24px;
    height: 24px;
    flex: none;
    border-radius: 50%;
    border: 1px solid rgba(0, 0, 0, 0.45);
    box-shadow: inset 0 0 0 1px rgba(255, 255, 255, 0.4);
}

.tex-black,
.black {
    background: #040404;
}

.tex-graphite {
    background: #8e8a66;
}

.tex-dark-graphite {
    background: #3b3358;
}

.tex-sepia {
    background: #7a3e2e;
}

.charcoal {
    background: #6f6f6f;
}

.coffee {
    background: #5f2a10;
}

.dark-brown {
    background: #5a3a14;
}

.iron-ore {
    background: #2f4268;
}

.regent {
    background: #c4c4c4;
    border-color: #a9acaf;
}

.stone {
    background: #c6c0b6;
    border-color: #b6b1a8;
}

.white {
    background: #fff;
    border-color: #c9ccd0;
}

/* ====== Preview ====== */
.preview {
    flex: 1;
    min-width: 0;
    padding: 25px 21px 0 26px;
    background: #dfe5ed;
    overflow: hidden;
}

.preview-head {
    display: flex;
    justify-content: space-between;
    padding-right: 10px;
}

.preview-eyebrow {
    font-size: 10.8px;
    line-height: 14px;
    font-weight: 600;
    letter-spacing: 0.13em;
    color: #6f7c8e;
}

.preview-title {
    margin-top: -1px;
    font-size: 16.85px;
    line-height: 22px;
    font-weight: 600;
    color: #14202d;
}

.expand {
    margin-top: 6px;
    display: flex;
    align-items: center;
    gap: 9px;
    height: 20px;
    font-size: 13.8px;
    font-weight: 600;
    color: #14263a;
}

.expand .icon {
    width: 17px;
    height: 17px;
}

.stats {
    margin-top: 15px;
    margin-left: 1px;
    display: grid;
    grid-template-columns: repeat(3, 245px);
    gap: 14px;
}

.stat {
    height: 67px;
    padding: 11px 16px 0;
    background: #f5f7fa;
    border: 1px solid #e6eaf0;
    border-radius: 16px;
}

.stat-label {
    font-size: 10.5px;
    line-height: 14px;
    font-weight: 600;
    letter-spacing: 0.14em;
    color: #6f7c8e;
}

.stat-value {
    margin-top: 4px;
    font-size: 19.2px;
    line-height: 25px;
    font-weight: 600;
    letter-spacing: -0.02em;
    color: #10161f;
}

.frame {
    margin-top: 17px;
    height: 800px;
    background: #cdd5e1;
    border-radius: 18px 18px 0 0;
}

.doc {
    width: 688px;
    height: 100%;
    background: #fff;
    border-top: 6px solid #1565b5;
    border-radius: 14px 0 0 0;
    box-shadow: 0 4px 18px rgba(30, 50, 80, 0.1);
}

.doc-head {
    height: 117px;
    padding: 30px 35px 0 36px;
    display: flex;
    justify-content: space-between;
    border-bottom: 1px solid #eceff3;
}

.doc-logo {
    width: 100px;
    height: 58px;
    margin-top: 3px;
}

.doc-logo-name {
    font: 600 18px Inter, sans-serif;
    fill: #0e141b;
}

.doc-logo-sub {
    font: 700 6px Inter, sans-serif;
    fill: #1f6bb5;
}

.doc-meta {
    text-align: right;
}

.doc-meta-label {
    margin-top: -2px;
    font-size: 8px;
    line-height: 10px;
    font-weight: 600;
    letter-spacing: 0.12em;
    color: #808b9a;
}

.doc-no {
    margin-top: 5px;
    font-size: 12.4px;
    line-height: 18px;
    font-weight: 600;
    color: #1765b3;
}

.doc-dates {
    margin-top: 9px;
    display: flex;
    justify-content: flex-end;
    gap: 16px;
}

.doc-date-label {
    font-size: 7px;
    line-height: 9px;
    letter-spacing: 0.08em;
    color: #a5aeba;
}

.doc-date {
    margin-top: 1px;
    font-size: 8.6px;
    line-height: 13px;
    font-weight: 600;
    color: #28323f;
}

.doc-band {
    height: 152px;
    padding: 0 35px 0 33px;
    display: flex;
    justify-content: space-between;
    background: #f8f9fb;
}

.doc-small-label {
    margin-top: 26px;
    font-size: 8.5px;
    line-height: 10px;
    font-weight: 700;
    letter-spacing: 0.15em;
    color: #6f7c8e;
}

.doc-client {
    margin-top: 6px;
    font-size: 41.5px;
    line-height: 49px;
    font-weight: 700;
    letter-spacing: -0.055em;
    color: #12263f;
}

.doc-contact {
    font-size: 12.2px;
    line-height: 18px;
    color: #7b8796;
}

.doc-contact-small {
    font-size: 11.2px;
}

.doc-total {
    width: 200px;
    height: 78px;
    margin-top: 47px;
    padding: 12px 13px 0 0;
    text-align: right;
    background: #fff;
    border: 1px solid #eef1f5;
    border-radius: 14px;
}

.doc-total-label {
    font-size: 7.5px;
    line-height: 10px;
    font-weight: 700;
    letter-spacing: 0.1em;
    color: #8a95a3;
}

.doc-total-value {
    margin-top: 2px;
    font-size: 20.2px;
    line-height: 28px;
    font-weight: 600;
    letter-spacing: -0.03em;
    color: #1765b3;
}

.doc-total-sub {
    margin-top: 1px;
    font-size: 8.6px;
    line-height: 11px;
    color: #8a95a3;
}

.doc-body {
    padding: 28px 35px 0 33px;
}

.doc-from {
    font-size: 8px;
    line-height: 10px;
    font-weight: 600;
    letter-spacing: 0.14em;
    color: #6f7c8e;
}

.doc-company {
    margin-top: 4px;
    font-size: 22.5px;
    line-height: 30px;
    font-weight: 700;
    letter-spacing: -0.06em;
    color: #12263f;
}

.doc-address {
    margin-top: 5px;
    font-size: 12.4px;
    line-height: 18px;
    color: #7b8796;
}

.facts {
    margin-top: 24px;
    display: grid;
    grid-template-columns: repeat(3, 1fr);
    gap: 15px;
}

.fact {
    height: 97px;
    padding: 11px 6px 0 12px;
    display: flex;
    gap: 8px;
    background: #fff;
    border: 1px solid #eceff5;
    border-radius: 14px;
}

.fact-icon {
    width: 26px;
    height: 27px;
    flex: none;
    display: flex;
    align-items: center;
    justify-content: center;
    border-radius: 8px;
    background: #eff3f8;
    color: #3c5679;
}

.fact-icon .icon {
    width: 13px;
    height: 13px;
}

.fact-body {
    flex: 1;
    display: flex;
    flex-direction: column;
    height: 84px;
}

.fact-label {
    margin-top: -2px;
    font-size: 8px;
    line-height: 10px;
    font-weight: 700;
    letter-spacing: 0.13em;
    color: #6f7c8e;
}

.fact-text {
    flex: 1;
    display: flex;
    align-items: center;
    padding-bottom: 2px;
    font-size: 9.2px;
    line-height: 11.3px;
    font-weight: 600;
    color: #27303c;
}

.doc-section {
    margin-top: 22px;
    display: flex;
    align-items: center;
    gap: 10px;
}

.doc-section-no {
    width: 26px;
    height: 27px;
    display: flex;
    align-items: center;
    justify-content: center;
    border-radius: 7px;
    background: #102c4a;
    color: #fff;
    font-size: 9px;
    font-weight: 700;
}

h3 {
    font-size: 18.5px;
    font-weight: 600;
    letter-spacing: -0.045em;
    color: #10161f;
}

.doc-table {
    margin-top: 13px;
    border: 1px solid #e9edf2;
    border-radius: 14px 14px 0 0;
}

.doc-row {
    display: grid;
    grid-template-columns: 413px 80px 1fr;
    column-gap: 6px;
    padding: 0 12px 0 12px;
}

.doc-row-head {
    height: 28px;
    padding-bottom: 2px;
    align-items: center;
    background: #f5f7fa;
    border-radius: 14px 14px 0 0;
    font-size: 8px;
    font-weight: 700;
    letter-spacing: 0.12em;
    color: #6a7a90;
}

.doc-item-title {
    margin-top: 13px;
    font-size: 12.8px;
    line-height: 17px;
    font-weight: 600;
    white-space: nowrap;
    color: #10161f;
}

.doc-item-desc {
    margin-top: 5px;
    font-size: 10.2px;
    line-height: 16.3px;
    color: #7b8794;
}

.doc-item-qty {
    margin-top: 13px;
    font-size: 12.5px;
    line-height: 17px;
    color: #7b8794;
}

.doc-item-total {
    margin-top: 13px;
    font-size: 13px;
    line-height: 17px;
    font-weight: 600;
    text-align: right;
    color: #10161f;
}
```
